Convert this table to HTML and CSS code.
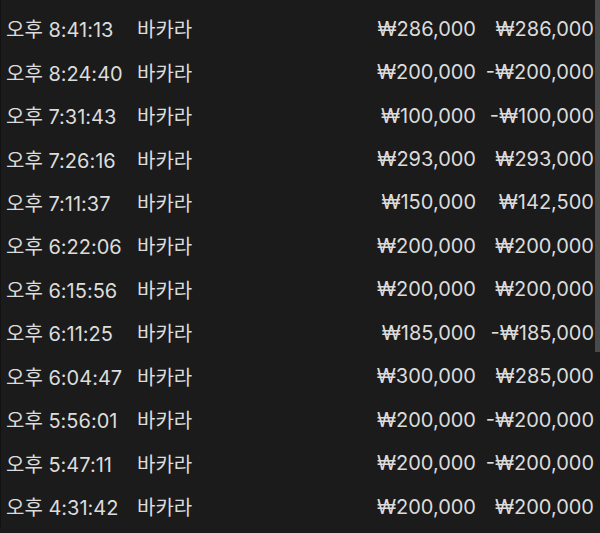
FILE: index.html
```html
<!DOCTYPE html>
<html lang="ko">
<head>
<meta charset="utf-8">
<link rel="stylesheet" href="styles.css">
</head>
<body>
<div class="list">
  <div class="row"><span class="time">오후 8:41:13</span><span class="game">바카라</span><span class="bet">₩286,000</span><span class="result">₩286,000</span></div>
  <div class="row"><span class="time">오후 8:24:40</span><span class="game">바카라</span><span class="bet">₩200,000</span><span class="result">-₩200,000</span></div>
  <div class="row"><span class="time">오후 7:31:43</span><span class="game">바카라</span><span class="bet">₩100,000</span><span class="result">-₩100,000</span></div>
  <div class="row"><span class="time">오후 7:26:16</span><span class="game">바카라</span><span class="bet">₩293,000</span><span class="result">₩293,000</span></div>
  <div class="row"><span class="time">오후 7:11:37</span><span class="game">바카라</span><span class="bet">₩150,000</span><span class="result">₩142,500</span></div>
  <div class="row"><span class="time">오후 6:22:06</span><span class="game">바카라</span><span class="bet">₩200,000</span><span class="result">₩200,000</span></div>
  <div class="row"><span class="time">오후 6:15:56</span><span class="game">바카라</span><span class="bet">₩200,000</span><span class="result">₩200,000</span></div>
  <div class="row"><span class="time">오후 6:11:25</span><span class="game">바카라</span><span class="bet">₩185,000</span><span class="result">-₩185,000</span></div>
  <div class="row"><span class="time">오후 6:04:47</span><span class="game">바카라</span><span class="bet">₩300,000</span><span class="result">₩285,000</span></div>
  <div class="row"><span class="time">오후 5:56:01</span><span class="game">바카라</span><span class="bet">₩200,000</span><span class="result">-₩200,000</span></div>
  <div class="row"><span class="time">오후 5:47:11</span><span class="game">바카라</span><span class="bet">₩200,000</span><span class="result">-₩200,000</span></div>
  <div class="row"><span class="time">오후 4:31:42</span><span class="game">바카라</span><span class="bet">₩200,000</span><span class="result">₩200,000</span></div>
</div>
<div class="scrollbar"></div>
</body>
</html>
```

FILE: styles.css
```css
html, body {
  margin: 0;
  padding: 0;
  background: #1b1b1b;
  width: 600px;
  height: 533px;
  overflow: hidden;
}
body {
  position: relative;
  font-family: Inter, "Noto Sans CJK KR", sans-serif;
  font-size: 20px;
  color: #dcdcdc;
}
.list {
  padding: 7px 6px 0 5px;
  border-left: 1px solid #121212;
}
.row {
  display: flex;
  align-items: center;
  height: 43.45px;
  white-space: nowrap;
}
.time {
  width: 131px;
}
.game {
  flex: 1;
}
.bet {
  text-align: right;
}
.result {
  width: 118px;
  text-align: right;
}
.scrollbar {
  position: absolute;
  right: 0;
  top: 0;
  width: 5px;
  height: 352px;
  background: #4a4a4a;
}
```
